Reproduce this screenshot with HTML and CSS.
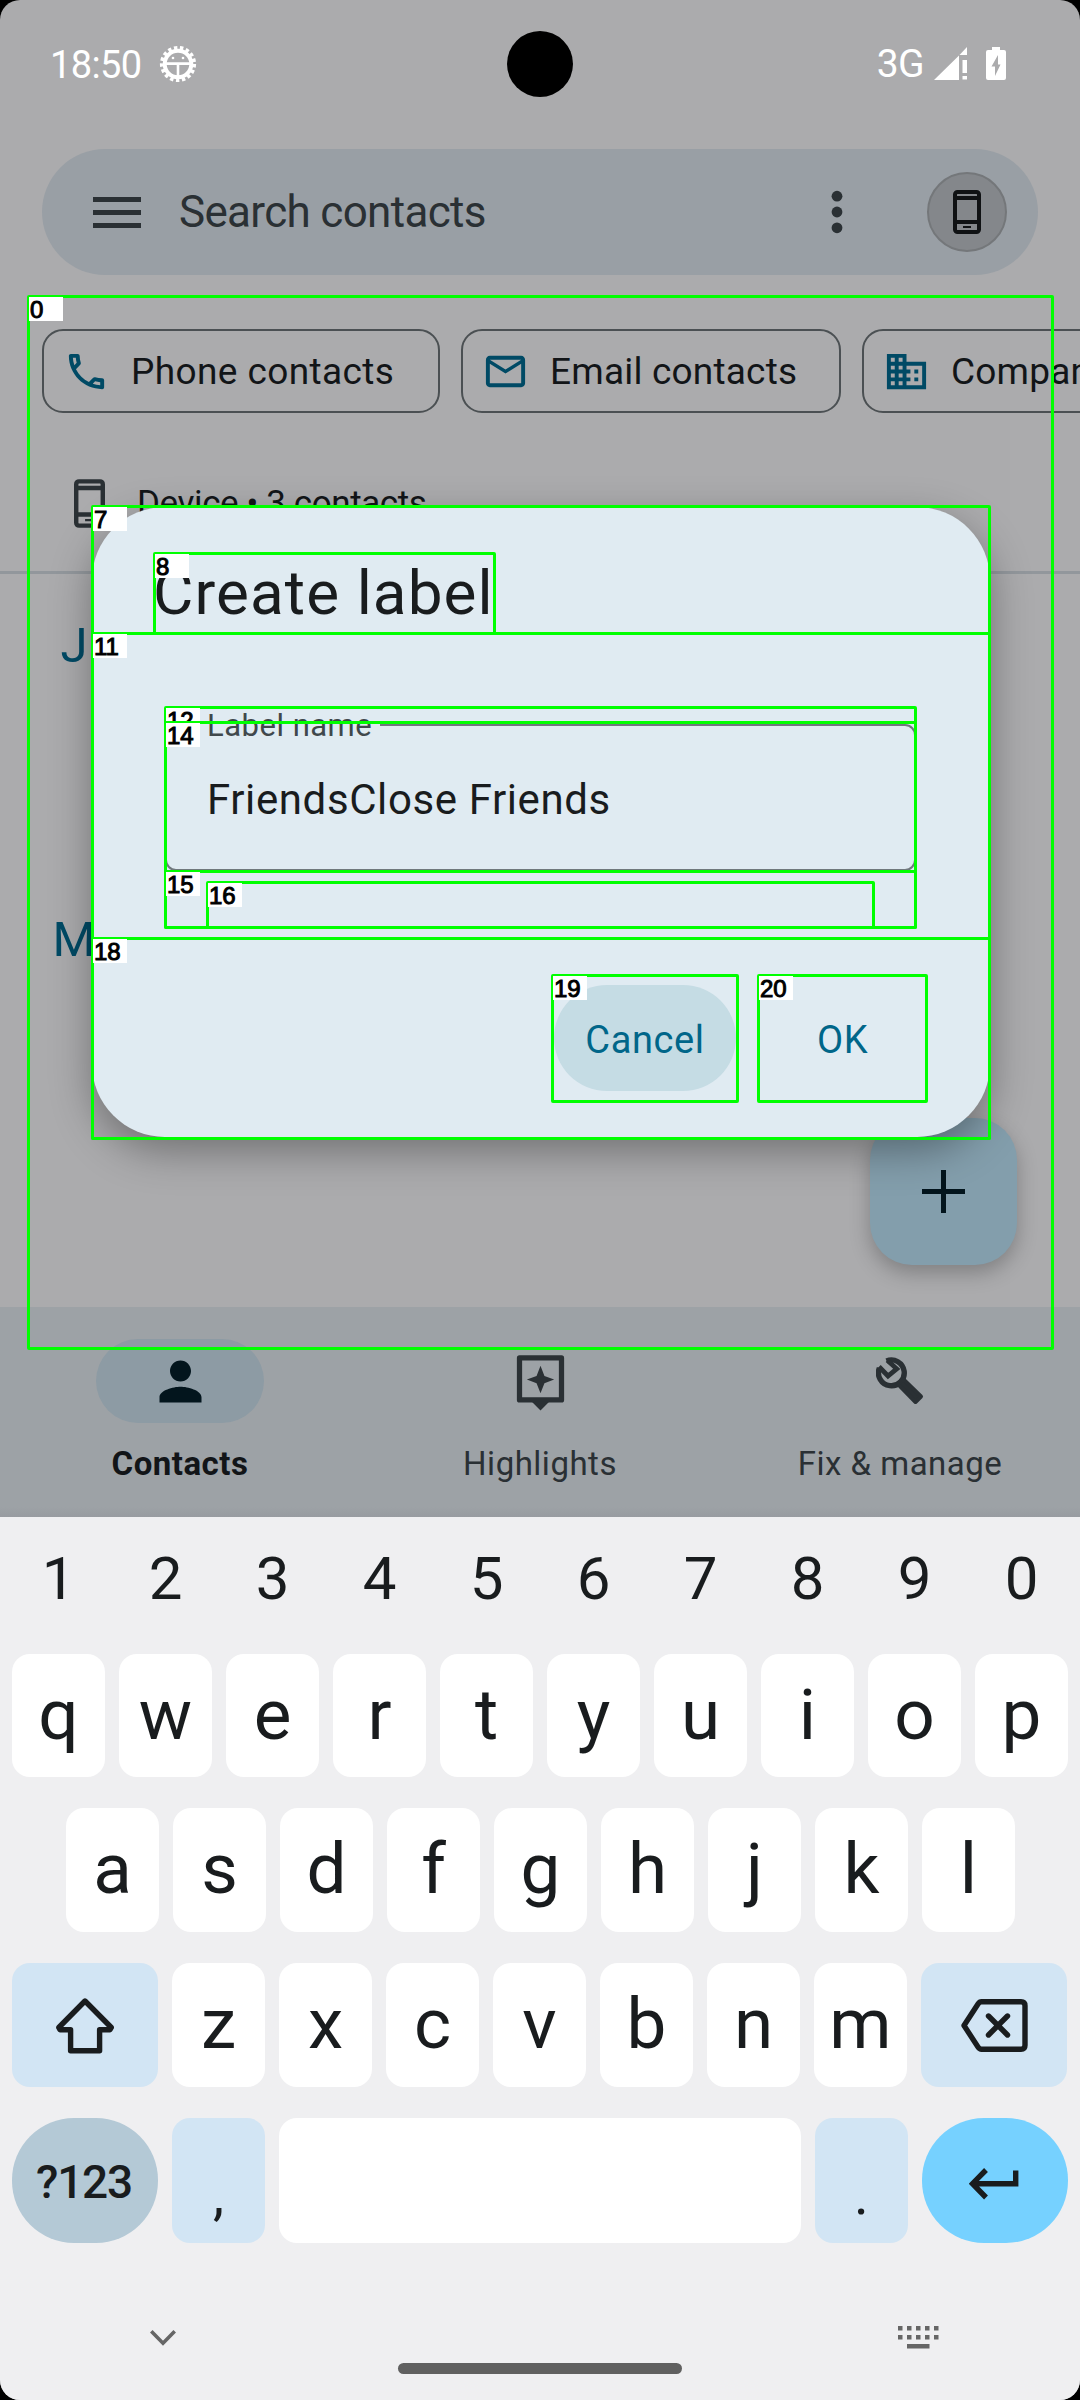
FILE: index.html
```html
<!DOCTYPE html>
<html lang="en">
<head>
<meta charset="utf-8">
<title>Contacts</title>
<link rel="stylesheet" href="styles.css">
</head>
<body>
<div class="phone">
  <div class="app">
    <header class="status">
      <div class="status-side">
        <span class="clock">18:50</span>
        <svg class="bug" viewBox="0 0 38 38"><g fill="none" stroke="#fff"><circle cx="19" cy="19" r="16.3" stroke-width="3.6" stroke-dasharray="3.4 2.62"/><circle cx="19" cy="19" r="13.3" stroke-width="4"/><path d="M6 18.6h26M19 18.6V34" stroke-width="2.6"/></g><circle cx="14" cy="13" r="1.3" fill="#fff"/><circle cx="24" cy="13" r="1.3" fill="#fff"/></svg>
      </div>
      <div class="status-side">
        <span class="network">3G</span>
        <svg class="signal" viewBox="0 0 33 33" fill="#fff"><path d="M0 33 25 8.500V33zM25.500 8 33 0v8zM28.500 13H33v13h-4.500zM28.500 29H33v3.500h-4.500z"/></svg>
        <svg class="battery" viewBox="0 0 20 33"><path fill="#fff" fill-rule="evenodd" d="M6 0h8v3h4a2 2 0 0 1 2 2v26a2 2 0 0 1-2 2H2a2 2 0 0 1-2-2V5a2 2 0 0 1 2-2h4zM12 8 5.500 19.500H9V29l5.500-11.500H12z"/></svg>
      </div>
    </header>
    <div class="camera"></div>

    <div class="search">
      <svg class="menu" viewBox="0 0 48 31"><path fill="#2a3034" d="M0 0h48v5H0zM0 13h48v5H0zM0 26h48v5H0z"/></svg>
      <span class="search-text">Search contacts</span>
      <svg class="more" viewBox="0 0 12 44" fill="#2a3034"><circle cx="6" cy="6.200" r="5.400"/><circle cx="6" cy="22" r="5.400"/><circle cx="6" cy="37.800" r="5.400"/></svg>
      <div class="avatar"><svg class="device" viewBox="0 0 28 44"><use href="#device"/></svg></div>
    </div>

    <div class="chips">
      <div class="chip chip-phone"><svg viewBox="0 0 24 24"><path d="M6.540 5c.06.89.21 1.760.45 2.590l-1.200 1.200c-.41-1.200-.67-2.470-.76-3.790h1.510m9.860 12.020c.85.24 1.720.39 2.600.45v1.490c-1.320-.09-2.590-.35-3.800-.75l1.200-1.190M7.500 3H4c-.55 0-1 .45-1 1 0 9.390 7.610 17 17 17 .55 0 1-.45 1-1v-3.490c0-.55-.45-1-1-1-1.240 0-2.450-.2-3.570-.57-.1-.04-.21-.05-.31-.05-.26 0-.51.1-.71.29l-2.200 2.200c-2.830-1.450-5.150-3.760-6.590-6.590l2.200-2.200c.28-.28.36-.67.25-1.020C8.700 6.450 8.500 5.250 8.500 4c0-.55-.45-1-1-1z"/></svg><span class="chip-text chip-text-phone">Phone contacts</span></div>
      <div class="chip chip-email"><svg viewBox="0 0 24 24"><path d="M22 6c0-1.100-.9-2-2-2H4c-1.100 0-2 .9-2 2v12c0 1.100.9 2 2 2h16c1.100 0 2-.9 2-2V6zm-2 0l-8 5-8-5h16zm0 12H4V8l8 5 8-5v10z"/></svg><span class="chip-text">Email contacts</span></div>
      <div class="chip chip-company"><svg viewBox="0 0 24 24"><path d="M12 7V3H2v18h20V7H12zM6 19H4v-2h2v2zm0-4H4v-2h2v2zm0-4H4V9h2v2zm0-4H4V5h2v2zm4 12H8v-2h2v2zm0-4H8v-2h2v2zm0-4H8V9h2v2zm0-4H8V5h2v2zm10 12h-8v-2h2v-2h-2v-2h2v-2h-2V9h8v10zm-2-8h-2v2h2v-2zm0 4h-2v2h2v-2z"/></svg><span class="chip-text">Company</span></div>
    </div>

    <div class="account">
      <svg class="device-large" viewBox="0 0 28 44"><use href="#device"/></svg>
      <span class="account-text">Device • 3 contacts</span>
    </div>

    <div class="list">
      <div class="group">J</div>
      <div class="group">M</div>
    </div>

    <div class="fab"><svg viewBox="0 0 43 43"><path fill="#03151d" d="M19 0h5v19h19v5H24v19h-5V24H0v-5h19z"/></svg></div>

    <nav class="tabs">
      <div class="tab">
        <div class="tab-icon tab-active"><svg viewBox="0 0 24 24" fill="#03151d"><path d="M12 12c2.210 0 4-1.790 4-4s-1.790-4-4-4-4 1.790-4 4 1.790 4 4 4zm0 2c-2.670 0-8 1.340-8 4v2h16v-2c0-2.660-5.330-4-8-4z"/></svg></div>
        <span class="tab-text tab-on">Contacts</span>
      </div>
      <div class="tab">
        <div class="tab-icon"><svg viewBox="0 0 24 24"><path fill="none" stroke="#2a3034" stroke-width="2" stroke-linejoin="round" d="M4 3h16v16H4z"/><path fill="#2a3034" d="M8.500 19.500h7L12 23zM12 6l1.500 3.900L17.200 11.200l-3.700 1.500L12 16.500l-1.500-3.800-3.700-1.500 3.700-1.300z"/></svg></div>
        <span class="tab-text">Highlights</span>
      </div>
      <div class="tab">
        <div class="tab-icon"><svg class="wrench" viewBox="0 0 48 48" fill="none" stroke="#2a3034"><path stroke-width="5.400" d="M10.500 3.900A12.900 12.900 0 1 1 3.400 11"/><path stroke-width="4.800" d="M3 9.800 12 19l8.700-7.200-9.400-8.600"/><path stroke-linejoin="round" stroke-width="4" fill="#2a3034" d="M22 27 27 22 45 39.500 39.500 45z"/></svg></div>
        <span class="tab-text">Fix &amp; manage</span>
      </div>
    </nav>
  </div>

  <section class="dialog">
    <h1 class="dialog-title">Create label</h1>
    <div class="field">
      <span class="field-label">Label name</span>
      <span class="field-value">FriendsClose Friends</span>
    </div>
    <div class="actions">
      <div class="button cancel">Cancel</div>
      <div class="button ok">OK</div>
    </div>
  </section>

  <div class="keyboard">
    <div class="digits"><span>1</span><span>2</span><span>3</span><span>4</span><span>5</span><span>6</span><span>7</span><span>8</span><span>9</span><span>0</span></div>
    <div class="keys">
      <div class="row row-top"><span class="key">q</span><span class="key">w</span><span class="key">e</span><span class="key">r</span><span class="key">t</span><span class="key">y</span><span class="key">u</span><span class="key">i</span><span class="key">o</span><span class="key">p</span></div>
      <div class="row row-home"><span class="key">a</span><span class="key">s</span><span class="key">d</span><span class="key">f</span><span class="key">g</span><span class="key">h</span><span class="key">j</span><span class="key">k</span><span class="key">l</span></div>
      <div class="row">
        <span class="key wide tint"><svg class="shift" viewBox="0 0 58 57"><path d="M29 4 55.300 30.500 54 32.700H43.600V53.700H14.600V32.700H4L2.800 30.500z"/></svg></span>
        <span class="key">z</span><span class="key">x</span><span class="key">c</span><span class="key">v</span><span class="key">b</span><span class="key">n</span><span class="key">m</span>
        <span class="key wide tint"><svg class="erase" viewBox="0 0 67 53"><path d="M3 26.500 17 5q1.500-2.200 3.500-2.200H60q4 0 4 4v39.400q0 4-4 4H20.500q-2 0-3.500-2.200zM27.500 17l19 19M46.500 17l-19 19" stroke-linecap="round"/></svg></span>
      </div>
      <div class="row row-last">
        <span class="key wide symbols">?123</span>
        <span class="key tint punct">,</span>
        <span class="key space"></span>
        <span class="key tint punct">.</span>
        <span class="key wide enter"><svg class="return" viewBox="0 0 50 32"><path d="M17 2 3.500 15.700 17 29.500M4 15.700H46.700V2.500"/></svg></span>
      </div>
    </div>
    <div class="system">
      <svg class="hide" viewBox="0 0 26 16"><path fill="none" stroke="#666" stroke-width="3.600" d="M1.300 1.300 13 13.200 24.700 1.300"/></svg>
      <div class="home"></div>
      <svg class="switch" viewBox="0 0 41 23" fill="#666"><path d="M0 0h4.500v4.500H0zM9 0h4.500v4.500H9zM18 0h4.500v4.500H18zM27 0h4.500v4.500H27zM36 0h4.500v4.500H36zM0 9h4.500v4.500H0zM9 9h4.500v4.500H9zM18 9h4.500v4.500H18zM27 9h4.500v4.500H27zM36 9h4.500v4.500H36zM9 18h22.500v4.500H9z"/></svg>
    </div>
  </div>

  <div class="boxes">
    <div class="box b0"><b>0</b></div>
    <div class="box b7"><b>7</b></div>
    <div class="box b8"><b>8</b></div>
    <div class="box b11"><b>11</b></div>
    <div class="box b12"><b>12</b></div>
    <div class="box b14"><b>14</b></div>
    <div class="box b15"><b>15</b></div>
    <div class="box b16"><b>16</b></div>
    <div class="box b18"><b>18</b></div>
    <div class="box b19"><b>19</b></div>
    <div class="box b20"><b>20</b></div>
  </div>
</div>
<svg width="0" height="0" class="defs"><defs><g id="device"><rect x="2" y="2" width="24" height="40" rx="2.500" fill="none" stroke="currentColor" stroke-width="4"/><path fill="currentColor" d="M3 6h22v4H3zM3 30h22v4H3zM10 36h8v2h-8z"/></g></defs></svg>
</body>
</html>
```
FILE: styles.css
```css
* { box-sizing: border-box; }
body { margin: 0; background: #000; font-family: Roboto, "Liberation Sans", sans-serif; }
svg { display: block; flex: none; }
.defs { position: absolute; }
.phone { position: relative; width: 1080px; height: 2400px; overflow: hidden; border-radius: 20px; background: #ababad; }
.app { display: flex; flex-direction: column; height: 1517px; overflow: hidden; color: #121518; }

.status { display: flex; justify-content: space-between; height: 149px; padding: 0 74px 22px 50px; color: #fff; }
.status-side { display: flex; align-items: center; }
.clock { padding-top: 3px; font-size: 38px; letter-spacing: -.6px; }
.bug { width: 38px; height: 38px; margin-left: 17px; }
.network { font-size: 39px; letter-spacing: -.6px; }
.signal { width: 33px; height: 33px; margin-left: 10px; }
.battery { width: 20px; height: 33px; margin-left: 19px; }
.camera { position: absolute; left: 507px; top: 31px; width: 66px; height: 66px; border-radius: 50%; background: #000; }

.search { display: flex; align-items: center; flex: none; height: 126px; margin: 0 42px; padding: 0 31px 0 51px; border-radius: 63px; background: #999fa5; color: #2a3034; }
.menu { width: 48px; height: 31px; }
.search-text { flex: 1; margin-left: 38px; font-size: 44px; letter-spacing: -.68px; white-space: nowrap; }
.more { width: 12px; height: 44px; margin-right: 84px; }
.avatar { display: flex; align-items: center; justify-content: center; width: 80px; height: 80px; border: 2px solid #74777a; border-radius: 50%; background: #84878b; color: #101214; }
.device { width: 28px; height: 44px; }

.chips { display: flex; gap: 21px; flex: none; margin-top: 54px; padding-left: 42px; }
.chip { display: flex; align-items: center; flex: none; height: 84px; padding-left: 19px; border: 2px solid #4b5053; border-radius: 21px; }
.chip svg { width: 47px; height: 47px; fill: #004a65; }
.chip-text { margin-left: 21px; font-size: 37px; font-weight: 450; letter-spacing: .2px; white-space: nowrap; }
.chip-text-phone { letter-spacing: .4px; }
.chip-phone { width: 398px; }
.chip-email { width: 380px; }
.chip-company { width: 440px; }

.account { display: flex; align-items: center; flex: none; height: 161px; padding: 22px 0 0 74px; border-bottom: 3px solid #92979c; }
.device-large { width: 31px; height: 49px; color: #2a3034; }
.account-text { margin-left: 32px; font-size: 35px; font-weight: 450; letter-spacing: -.4px; }

.list { flex: 1; overflow: hidden; color: #004a65; font-size: 49px; font-weight: 450; }
.group { width: 148px; height: 294px; line-height: 144px; text-align: center; }

.fab { position: absolute; left: 870px; top: 1118px; display: flex; align-items: center; justify-content: center; width: 147px; height: 147px; border-radius: 42px; background: #839eac; box-shadow: 0 8px 20px rgba(0, 0, 0, .25); }
.fab svg { width: 43px; height: 43px; }

.tabs { display: grid; grid-template-columns: repeat(3, 1fr); flex: none; height: 210px; padding-top: 32px; background: linear-gradient(#9da2a6 200px, #979ba0); }
.tab { display: flex; flex-direction: column; align-items: center; gap: 21px; color: #2a3034; }
.tab-icon { display: flex; align-items: center; justify-content: center; width: 168px; height: 84px; border-radius: 42px; }
.tab-icon svg { width: 63px; height: 63px; }
.tab-icon .wrench { width: 48px; height: 48px; }
.tab-active { background: #8d9ba4; }
.tab-text { font-size: 33px; line-height: 40px; font-weight: 450; letter-spacing: .5px; }
.tab-on { font-weight: 700; color: #121518; }

.dialog { position: absolute; left: 92px; top: 507px; width: 898px; height: 630px; padding-top: 45px; border-radius: 73px; background: #e0ebf2; box-shadow: 0 14px 40px rgba(0, 0, 0, .34); color: #191c1e; }
.dialog-title { margin: 0 0 0 61px; font-size: 62px; line-height: 82px; font-weight: 400; letter-spacing: 1.100px; }
.field { position: relative; display: flex; align-items: center; width: 751px; height: 147px; margin: 90px 0 0 73px; padding: 3px 0 0 40px; border: 2px solid #70787d; border-radius: 11px; }
.field-label { position: absolute; left: 32px; top: -20px; padding: 0 8px; background: #e0ebf2; color: #40484c; font-size: 31px; line-height: 40px; letter-spacing: .5px; }
.field-value { font-size: 42px; letter-spacing: .6px; }
.actions { display: flex; justify-content: flex-end; gap: 21px; padding: 114px 62px 0 0; }
.button { display: flex; align-items: center; justify-content: center; height: 106px; padding-top: 4px; color: #006689; font-size: 38px; font-weight: 450; letter-spacing: .6px; }
.cancel { width: 182px; border-radius: 53px; background: #c5dce4; }
.ok { width: 171px; }

.keyboard { height: 883px; padding: 0 12px; background: #efeff1; color: #191c1e; }
.digits { display: flex; gap: 14px; height: 123px; line-height: 123px; font-size: 60px; }
.digits span { width: 93px; text-align: center; }
.keys { display: flex; flex-direction: column; gap: 31px; padding-top: 14px; }
.row { display: flex; gap: 14px; height: 124px; }
.row-top { height: 123px; }
.row-home { padding: 0 54px; }
.row-last { height: 125px; }
.key { display: flex; align-items: center; justify-content: center; flex: none; width: 93px; padding-bottom: 3px; border-radius: 18px; background: #fff; font-size: 71px; }
.key.wide { width: 146px; padding-bottom: 0; }
.tint { background: #d2e5f4; }
.key svg { fill: none; stroke: #191c1e; stroke-width: 5.400; stroke-linejoin: round; }
.shift { width: 58px; height: 57px; }
.erase { width: 67px; height: 53px; }
.return { width: 50px; height: 32px; margin: 6px 2px 0 0; }
.key .return { stroke-linejoin: miter; }
.key.symbols { padding: 3px 2px 0 0; border-radius: 62px; background: #b4c9d6; font-size: 46px; font-weight: 500; letter-spacing: -1.200px; }
.key.punct { padding: 28px 0 0; font-size: 56px; }
.key.space { flex: 1; }
.enter { border-radius: 62px; background: #76d1ff; }
.system { display: flex; align-items: flex-start; padding-left: 138px; }
.hide { width: 26px; height: 16px; margin-top: 87px; }
.home { width: 284px; height: 11px; margin: 120px 216px 0 222px; border-radius: 6px; background: #606060; }
.switch { width: 41px; height: 23px; margin-top: 83px; }

.box { position: absolute; border: 3px solid #0f0; border-radius: 2px; }
.box b { position: absolute; left: -1px; top: -1px; width: 34px; height: 24px; padding-left: 1px; background: #fff; color: #000; font: 400 24px/25px "Liberation Sans", sans-serif; -webkit-text-stroke: 1px #000; }
.b0 { left: 27px; top: 295px; width: 1027px; height: 1055px; }
.b7 { left: 91px; top: 505px; width: 900px; height: 635px; }
.b8 { left: 153px; top: 552px; width: 343px; height: 83px; }
.b11 { left: 91px; top: 632px; width: 900px; height: 308px; }
.b12 { left: 164px; top: 706px; width: 753px; height: 223px; }
.b14 { left: 164px; top: 721px; width: 753px; height: 152px; }
.b15 { left: 164px; top: 870px; width: 753px; height: 59px; }
.b16 { left: 206px; top: 881px; width: 669px; height: 48px; }
.b18 { left: 91px; top: 937px; width: 900px; height: 203px; }
.b19 { left: 551px; top: 974px; width: 188px; height: 129px; }
.b20 { left: 757px; top: 974px; width: 171px; height: 129px; }
```
